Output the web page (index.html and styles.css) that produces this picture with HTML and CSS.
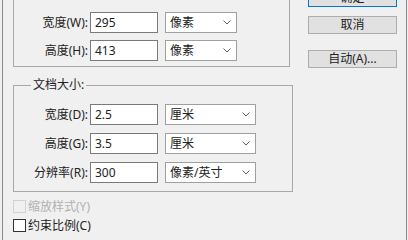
FILE: index.html
```html
<!DOCTYPE html>
<html lang="zh-CN">
<head>
    <meta charset="UTF-8">
    <meta name="viewport" content="width=device-width, initial-scale=1.0">
    <title>图像大小</title>
    <link rel="stylesheet" href="styles.css">
</head>
<body>
    <div class="dialog">
        <div class="main">
            <div class="group pixels">
                <div class="row">
                    <label class="label">宽度(W):</label>
                    <div class="input">295</div>
                    <div class="select short">像素<svg class="chev" viewBox="0 0 8 5"><path d="M0.5 0.5 L4 4 L7.5 0.5"/></svg></div>
                </div>
                <div class="row">
                    <label class="label">高度(H):</label>
                    <div class="input">413</div>
                    <div class="select short">像素<svg class="chev" viewBox="0 0 8 5"><path d="M0.5 0.5 L4 4 L7.5 0.5"/></svg></div>
                </div>
            </div>

            <fieldset class="group doc">
                <legend>文档大小:</legend>
                <div class="row">
                    <label class="label">宽度(D):</label>
                    <div class="input">2.5</div>
                    <div class="select">厘米<svg class="chev" viewBox="0 0 8 5"><path d="M0.5 0.5 L4 4 L7.5 0.5"/></svg></div>
                </div>
                <div class="row">
                    <label class="label">高度(G):</label>
                    <div class="input">3.5</div>
                    <div class="select">厘米<svg class="chev" viewBox="0 0 8 5"><path d="M0.5 0.5 L4 4 L7.5 0.5"/></svg></div>
                </div>
                <div class="row">
                    <label class="label">分辨率(R):</label>
                    <div class="input">300</div>
                    <div class="select">像素/英寸<svg class="chev" viewBox="0 0 8 5"><path d="M0.5 0.5 L4 4 L7.5 0.5"/></svg></div>
                </div>
            </fieldset>

            <div class="check disabled"><span class="box"></span>缩放样式(Y)</div>
            <div class="check"><span class="box"></span>约束比例(C)</div>
        </div>

        <div class="actions">
            <button class="default">确定</button>
            <button>取消</button>
            <button class="auto">自动(A)...</button>
        </div>
    </div>
</body>
</html>
```

FILE: styles.css
```css
* {
    margin: 0;
    padding: 0;
    box-sizing: border-box;
}

body {
    font-family: "Noto Sans", "Noto Sans CJK SC", sans-serif;
    font-size: 12px;
    color: #222;
    background: #f0f0f0;
    overflow: hidden;
}

.dialog {
    display: flex;
    height: 240px;
    width: 405px;
    margin-left: 2px;
    border-left: 1px solid #8a8a8a;
    border-right: 1px solid #8a8a8a;
    overflow: hidden;
}

.main {
    width: 300px;
    padding-left: 10px;
    flex-shrink: 0;
}

.group {
    border: 1px solid #a8a8a8;
}

.pixels {
    width: 277px;
    border-top: none;
    padding: 12px 0 5px;
    display: flex;
    flex-direction: column;
    gap: 7px;
}

.doc {
    width: 280px;
    margin-top: 10px;
    padding: 0 0 8px;
    display: flex;
    flex-direction: column;
    gap: 8px;
}

.doc legend {
    margin-left: 17px;
    padding: 0 2px;
    line-height: 16px;
    margin-bottom: 11px;
}

.row {
    display: flex;
    align-items: center;
    height: 21px;
}

.label {
    width: 75px;
    text-align: right;
    padding-right: 1px;
    line-height: 16px;
}

.input {
    width: 68px;
    height: 21px;
    margin-left: 1px;
    background: #fff;
    border: 1px solid #7a7a7a;
    padding-left: 4px;
    line-height: 19px;
}

.select {
    width: 91px;
    height: 21px;
    margin-left: 7px;
    background: #fff;
    border: 1px solid #a0a0a0;
    padding: 0 5px 0 4px;
    line-height: 19px;
    display: flex;
    align-items: center;
    justify-content: space-between;
}

.select.short {
    width: 72px;
}

.chev {
    width: 8px;
    height: 5px;
    fill: none;
    stroke: #606060;
    stroke-width: 1;
}

.check {
    display: flex;
    align-items: center;
    height: 19px;
    line-height: 19px;
}

.doc + .check {
    margin-top: 5px;
}

.box {
    width: 13px;
    height: 13px;
    border: 1px solid #333;
    background: #fff;
    margin-right: 2px;
}

.check.disabled {
    color: #b0b0b0;
}

.check.disabled .box {
    border-color: #d2d2d2;
    background: #f0f0f0;
}

.actions {
    margin-left: 5px;
    margin-top: -11px;
    display: flex;
    flex-direction: column;
    width: 89px;
}

button {
    font-family: inherit;
    font-size: 12px;
    color: #222;
    height: 18px;
    line-height: 16px;
    background: #e1e1e1;
    border: 1px solid #adadad;
    margin-top: 9px;
}

button.default {
    margin-top: 0;
    border-color: #0078d7;
}

button.auto {
    margin-top: 16px;
}
```
